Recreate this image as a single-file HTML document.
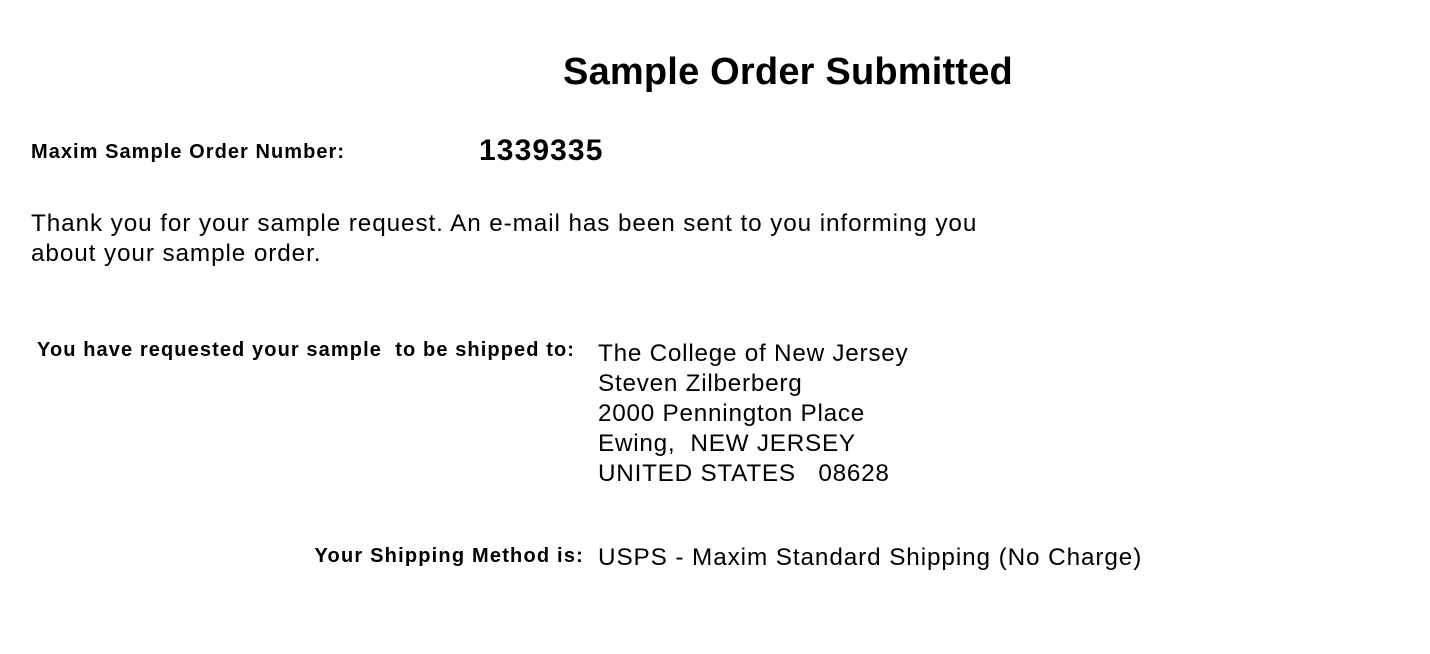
<!DOCTYPE html>
<html><head><meta charset="utf-8"><style>
body{margin:0;width:1430px;height:654px;background:#fff;font-family:"Liberation Sans",Arial,sans-serif;color:#000;position:relative;overflow:hidden}
div{position:absolute;white-space:nowrap}
.b{font-weight:bold}
.n{letter-spacing:0.9px}
</style></head><body>
<div class="b" style="left:0;width:1576px;text-align:center;top:53px;font-size:38px;line-height:1;letter-spacing:0.2px">Sample Order Submitted</div>
<div class="b" style="left:31px;top:142px;font-size:20px;line-height:1;letter-spacing:1.05px">Maxim Sample Order Number:</div>
<div class="b" style="left:479px;top:136px;font-size:30px;line-height:1;letter-spacing:1.1px">1339335</div>
<div class="n" style="left:31px;top:209px;font-size:24.3px;line-height:30px">Thank you for your sample request. An e-mail has been sent to you informing you<br>about your sample order.</div>
<div class="b" style="left:37px;top:340px;font-size:20px;line-height:1;letter-spacing:1.1px">You have requested your sample&nbsp; to be shipped to:</div>
<div style="left:598px;top:339px;font-size:24.3px;line-height:30px;letter-spacing:0.75px">The College of New Jersey<br>Steven Zilberberg<br>2000 Pennington Place<br>Ewing,&nbsp; NEW JERSEY<br>UNITED STATES&nbsp;&nbsp; 08628</div>
<div class="b" style="right:846px;top:546px;font-size:20px;line-height:1;letter-spacing:1.2px">Your Shipping Method is:</div>
<div class="n" style="left:598px;top:543px;font-size:24.3px;line-height:30px">USPS - Maxim Standard Shipping (No Charge)</div>
</body></html>
